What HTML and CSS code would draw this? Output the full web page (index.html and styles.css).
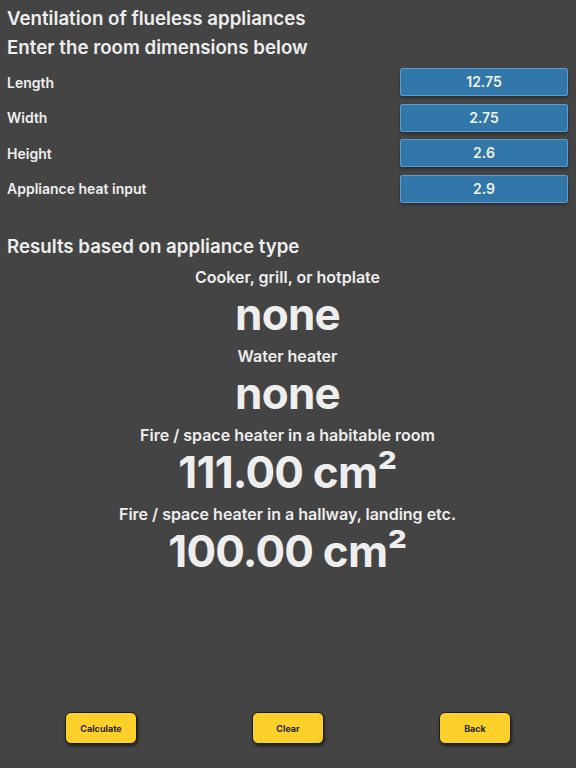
FILE: index.html
```html
<!DOCTYPE html>
<html lang="en">
<head>
<meta charset="utf-8">
<title>Ventilation of flueless appliances</title>
<link rel="stylesheet" href="styles.css">
</head>
<body>
<div class="page">
  <header class="head">
    <h1 class="title">Ventilation of flueless appliances</h1>
    <h2 class="title">Enter the room dimensions below</h2>
  </header>
  <section class="inputs">
    <div class="row"><span class="label">Length</span><div class="field">12.75</div></div>
    <div class="row"><span class="label">Width</span><div class="field">2.75</div></div>
    <div class="row"><span class="label">Height</span><div class="field">2.6</div></div>
    <div class="row"><span class="label">Appliance heat input</span><div class="field">2.9</div></div>
  </section>
  <section class="results">
    <h2 class="title">Results based on appliance type</h2>
    <div class="result">
      <div class="rlabel">Cooker, grill, or hotplate</div>
      <div class="rvalue">none</div>
    </div>
    <div class="result">
      <div class="rlabel">Water heater</div>
      <div class="rvalue">none</div>
    </div>
    <div class="result">
      <div class="rlabel">Fire / space heater in a habitable room</div>
      <div class="rvalue">111.00 cm²</div>
    </div>
    <div class="result">
      <div class="rlabel">Fire / space heater in a hallway, landing etc.</div>
      <div class="rvalue">100.00 cm²</div>
    </div>
  </section>
  <footer class="buttons">
    <button class="btn">Calculate</button>
    <button class="btn">Clear</button>
    <button class="btn">Back</button>
  </footer>
</div>
</body>
</html>
```
FILE: styles.css
```css
html, body {
  margin: 0;
  padding: 0;
  background: #444444;
}
body {
  font-family: Inter, "Liberation Sans", sans-serif;
  color: #eeeeee;
}
.page {
  height: 768px;
  display: flex;
  flex-direction: column;
  padding: 4px 8px 0 7px;
  box-sizing: border-box;
}
.title {
  margin: 0;
  font-size: 18.7px;
  font-weight: 600;
  line-height: 29px;
}
.head {
  margin-bottom: 6px;
}
.inputs {
  display: flex;
  flex-direction: column;
  gap: 7.5px;
}
.row {
  display: flex;
  justify-content: space-between;
  align-items: center;
}
.label {
  font-size: 14px;
  font-weight: 600;
}
.field {
  width: 166px;
  height: 26px;
  line-height: 26px;
  background: #3277aa;
  border: 1px solid #5b9bd0;
  border-radius: 2px;
  text-align: center;
  font-size: 14px;
  font-weight: 600;
  color: #f2f2f2;
  box-shadow: 0 2px 3px rgba(0, 0, 0, 0.35);
}
.results {
  margin-top: 29px;
  display: flex;
  flex-direction: column;
}
.results .title {
  margin-bottom: 6px;
}
.result {
  display: flex;
  flex-direction: column;
  align-items: center;
  text-align: center;
}
.rlabel {
  font-size: 16px;
  font-weight: 600;
  line-height: 20px;
}
.rvalue {
  font-size: 44px;
  font-weight: 700;
  line-height: 55px;
  margin-bottom: 4px;
  letter-spacing: -0.8px;
}
.buttons {
  margin-top: auto;
  margin-bottom: 24px;
  display: flex;
  justify-content: space-between;
  padding: 0 57px 0 58px;
}
.btn {
  width: 72px;
  height: 32px;
  background: #fdd12a;
  border: 1.5px solid #1e1a10;
  border-radius: 6px;
  box-shadow: 1px 2px 3px rgba(0, 0, 0, 0.55);
  font-family: Inter, "Liberation Sans", sans-serif;
  font-size: 9px;
  font-weight: 700;
  color: #2a2410;
  padding: 0;
}
```
